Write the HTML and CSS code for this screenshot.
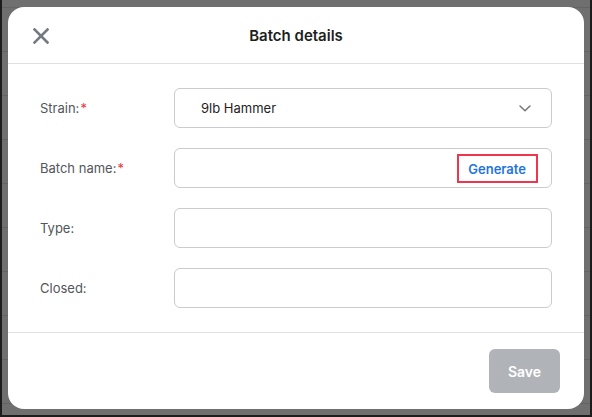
FILE: index.html
```html
<!DOCTYPE html>
<html lang="en">
<head>
<meta charset="utf-8">
<title>Batch details</title>
<link rel="stylesheet" href="styles.css">
</head>
<body>
<div class="modal">
  <div class="modal-header">
    <button class="close-btn" aria-label="Close">
      <svg width="16" height="16" viewBox="0 0 16 16"><path d="M1.5 1.5 L14.5 14.5 M14.5 1.5 L1.5 14.5" stroke="#737a81" stroke-width="2.6" stroke-linecap="square" fill="none"/></svg>
    </button>
    <h1 class="modal-title">Batch details</h1>
    <span class="header-spacer"></span>
  </div>
  <div class="modal-body">
    <div class="form-row">
      <label class="form-label">Strain:<span class="req">*</span></label>
      <div class="field select-field">
        <span class="field-value">9lb Hammer</span>
        <svg class="chevron" width="12" height="7" viewBox="0 0 12 7"><path d="M1 1 L6 5.8 L11 1" stroke="#6e7378" stroke-width="1.4" fill="none" stroke-linecap="round" stroke-linejoin="round"/></svg>
      </div>
    </div>
    <div class="form-row">
      <label class="form-label">Batch name:<span class="req">*</span></label>
      <div class="field generate-field">
        <span class="generate-wrap"><span class="generate-btn">Generate</span></span>
      </div>
    </div>
    <div class="form-row">
      <label class="form-label">Type:</label>
      <div class="field"></div>
    </div>
    <div class="form-row">
      <label class="form-label">Closed:</label>
      <div class="field"></div>
    </div>
  </div>
  <div class="modal-footer">
    <button class="save-btn">Save</button>
  </div>
</div>
</body>
</html>
```
FILE: styles.css
```css
* { box-sizing: border-box; }
html, body { margin: 0; padding: 0; }
body {
  width: 592px;
  height: 417px;
  overflow: hidden;
  background-color: #6f6f6f;
  background-image: repeating-linear-gradient(to bottom, transparent 0, transparent 7px, #646464 7px, #646464 8px, transparent 8px, transparent 44px);
  border-style: solid;
  border-color: #1d1d1d;
  border-width: 0 2px 2px 2px;
  font-family: "Inter", "Noto Sans", sans-serif;
  padding-top: 7px;
}
.modal {
  margin-left: 6px;
  width: 576px;
  height: 402px;
  background: #ffffff;
  border-radius: 16px;
  display: flex;
  flex-direction: column;
}
.modal-header {
  height: 57px;
  border-bottom: 1px solid #dedfe0;
  display: flex;
  align-items: center;
  padding: 0 24px;
  padding-top: 1px;
}
.close-btn {
  width: 16px;
  height: 16px;
  padding: 0;
  margin: 0 0 0 1px;
  border: 0;
  background: none;
  display: flex;
}
.header-spacer { width: 17px; }
.modal-title {
  flex: 1;
  margin: 0;
  text-align: center;
  font-size: 15px;
  font-weight: 600;
  color: #1d1f21;
}
.modal-body {
  padding: 24px 32px 24px 32px;
  display: flex;
  flex-direction: column;
  gap: 20px;
  border-bottom: 1px solid #dedfe0;
}
.form-row {
  display: flex;
  align-items: center;
  height: 40px;
}
.form-label {
  width: 134px;
  flex: none;
  font-size: 13px;
  color: #52565a;
}
.req { color: #e5383b; margin-left: 1px; }
.field {
  flex: 1;
  height: 40px;
  border: 1px solid #c9cbcd;
  border-radius: 6px;
  display: flex;
  align-items: center;
}
.select-field {
  padding: 0 20px 0 26px;
  justify-content: space-between;
}
.field-value {
  font-size: 13px;
  color: #1f2123;
}
.chevron { margin-top: 1px; }
.generate-field {
  justify-content: flex-end;
  padding-right: 13px;
}
.generate-wrap {
  border: 2px solid #f0364f;
  padding: 3px 10px 3px 9px;
  line-height: 18px;
}
.generate-btn {
  font-size: 13px;
  font-weight: 600;
  color: #1f74dc;
}
.modal-footer {
  flex: 1;
  display: flex;
  justify-content: flex-end;
  align-items: flex-start;
  padding: 16px 24px 0 0;
}
.save-btn {
  width: 71px;
  height: 44px;
  border: 0;
  border-radius: 6px;
  background: #b0b4b8;
  color: #ffffff;
  font-family: "Inter", "Noto Sans", sans-serif;
  font-size: 14px;
  font-weight: 600;
}
```
